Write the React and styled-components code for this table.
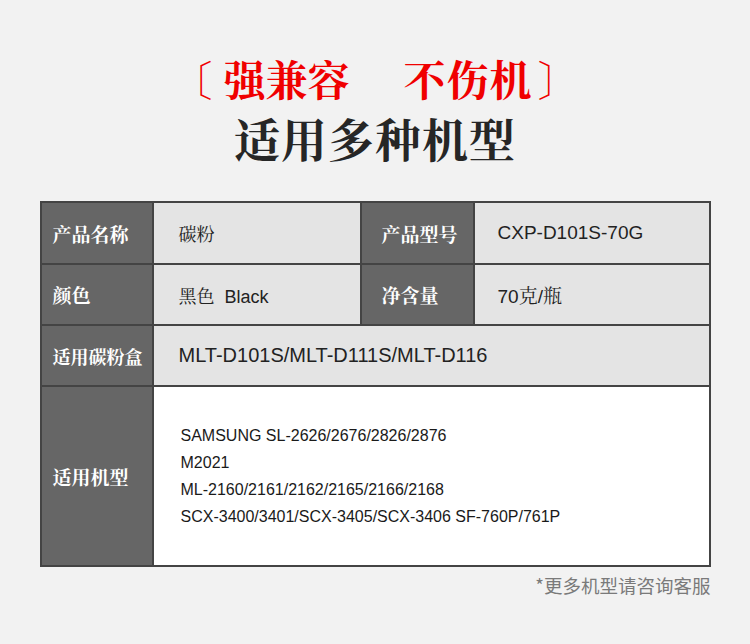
import React from "react";
import styled, { createGlobalStyle } from "styled-components";

const GlobalStyle = createGlobalStyle`
  html, body {
    margin: 0;
    padding: 0;
    background: #f2f2f2;
  }
  body {
    font-family: "Liberation Sans", "Noto Sans CJK SC", sans-serif;
  }
`;

const SERIF_CJK = `"Noto Serif CJK SC", "Noto Sans CJK SC", serif`;
const LATIN_CJK = `"Liberation Sans", "Noto Serif CJK SC", "Noto Sans CJK SC", sans-serif`;

const Page = styled.div`
  width: 750px;
  height: 644px;
  box-sizing: border-box;
  padding-top: 50px;
  display: flex;
  flex-direction: column;
  align-items: center;
  background: #f2f2f2;
  overflow: hidden;
`;

const Header = styled.header`
  display: flex;
  flex-direction: column;
  align-items: center;
  gap: 3px;
`;

const Slogan = styled.h1`
  margin: 0;
  display: flex;
  align-items: center;
  font-family: ${SERIF_CJK};
  font-weight: 700;
  font-size: 42px;
  line-height: 56px;
  color: #f00000;
  white-space: nowrap;
`;

const Bracket = styled.span`
  display: inline-block;
  width: 42px;
  font-weight: 400;
`;

const Word = styled.span`
  display: inline-block;
  margin: ${(p) => p.$margin || "0"};
  letter-spacing: ${(p) => p.$spacing || 0}px;
`;

const Subtitle = styled.h2`
  margin: 0;
  font-family: ${SERIF_CJK};
  font-weight: 700;
  font-size: 46px;
  line-height: 56px;
  color: #262626;
  letter-spacing: 1px;
`;

const Table = styled.div`
  margin-top: 36px;
  width: 671px;
  box-sizing: border-box;
  display: grid;
  grid-template-columns: 110px 206px 111px 234px;
  grid-template-rows: 60px 59px 59px 178px;
  gap: 2px;
  border: 2px solid #444;
  background: #444;
`;

const LabelCell = styled.div`
  background: #666;
  color: #ffffff;
  display: flex;
  align-items: center;
  padding-left: ${(p) => p.$pad || 11}px;
  font-family: ${SERIF_CJK};
  font-weight: 700;
  font-size: ${(p) => p.$size || 19}px;
  white-space: nowrap;
`;

const ValueCell = styled.div`
  background: ${(p) => (p.$white ? "#ffffff" : "#e4e4e4")};
  color: #222;
  display: flex;
  flex-direction: column;
  justify-content: center;
  padding-left: ${(p) => p.$pad || 25}px;
  font-family: ${LATIN_CJK};
  font-size: ${(p) => p.$size || 18}px;
  grid-column: ${(p) => (p.$span ? `span ${p.$span}` : "auto")};
  white-space: nowrap;
`;

const ModelLine = styled.div`
  font-family: "Liberation Sans", Arial, sans-serif;
  font-size: 16px;
  line-height: 27px;
  color: #1a1a1a;
`;

const Footnote = styled.p`
  margin: 6px 0 0;
  width: 671px;
  text-align: right;
  font-family: "Noto Sans CJK SC", sans-serif;
  font-size: 18.5px;
  line-height: 24px;
  color: #7a7a7a;
`;

const models = [
  "SAMSUNG SL-2626/2676/2826/2876",
  "M2021",
  "ML-2160/2161/2162/2165/2166/2168",
  "SCX-3400/3401/SCX-3405/SCX-3406 SF-760P/761P",
];

export default function App() {
  return (
    <>
      <GlobalStyle />
      <Page>
        <Header>
          <Slogan>
            <Bracket>〔</Bracket>
            <Word $margin="0 0 0 11px">强兼容</Word>
            <Word $margin="0 5px 0 54px" $spacing={1}>不伤机</Word>
            <Bracket>〕</Bracket>
          </Slogan>
          <Subtitle>适用多种机型</Subtitle>
        </Header>

        <Table>
          <LabelCell>产品名称</LabelCell>
          <ValueCell>碳粉</ValueCell>
          <LabelCell $pad={20}>产品型号</LabelCell>
          <ValueCell $pad={23} $size={19}>CXP-D101S-70G</ValueCell>

          <LabelCell>颜色</LabelCell>
          <ValueCell>黑色&nbsp;&nbsp;Black</ValueCell>
          <LabelCell $pad={20}>净含量</LabelCell>
          <ValueCell $pad={23} $size={19}>70克/瓶</ValueCell>

          <LabelCell $size={18}>适用碳粉盒</LabelCell>
          <ValueCell $span={3} $size={20}>MLT-D101S/MLT-D111S/MLT-D116</ValueCell>

          <LabelCell>适用机型</LabelCell>
          <ValueCell $span={3} $white $pad={27}>
            {models.map((m) => (
              <ModelLine key={m}>{m}</ModelLine>
            ))}
          </ValueCell>
        </Table>

        <Footnote>*更多机型请咨询客服</Footnote>
      </Page>
    </>
  );
}
